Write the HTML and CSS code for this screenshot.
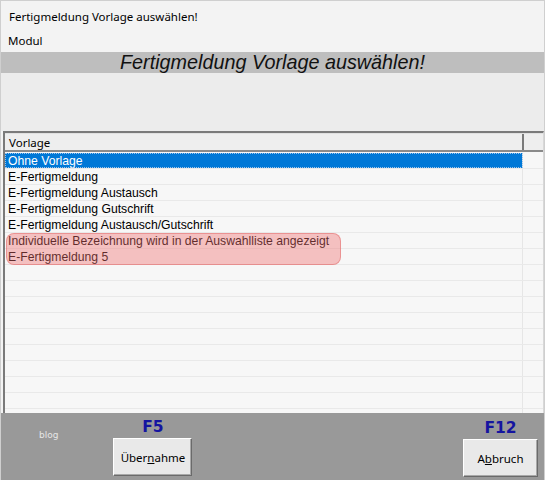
FILE: index.html
```html
<!DOCTYPE html>
<html lang="de">
<head>
<meta charset="utf-8">
<title>Fertigmeldung Vorlage auswählen!</title>
<link rel="stylesheet" href="styles.css">
</head>
<body>
<div class="window">
  <div class="titlebar">Fertigmeldung Vorlage auswählen!</div>
  <div class="menubar">Modul</div>
  <div class="banner">Fertigmeldung Vorlage auswählen!</div>
  <div class="spacer"></div>
  <div class="list">
    <div class="header">
      <div class="hcell">Vorlage</div>
      <div class="hcell hfill"></div>
    </div>
    <div class="rows">
      <div class="row selected"><div class="cell">Ohne Vorlage</div><div class="cell fill"></div></div>
      <div class="row"><div class="cell">E-Fertigmeldung</div><div class="cell fill"></div></div>
      <div class="row"><div class="cell">E-Fertigmeldung Austausch</div><div class="cell fill"></div></div>
      <div class="row"><div class="cell">E-Fertigmeldung Gutschrift</div><div class="cell fill"></div></div>
      <div class="row"><div class="cell">E-Fertigmeldung Austausch/Gutschrift</div><div class="cell fill"></div></div>
      <div class="row"><div class="cell">Individuelle Bezeichnung wird in der Auswahlliste angezeigt</div><div class="cell fill"></div></div>
      <div class="row"><div class="cell">E-Fertigmeldung 5</div><div class="cell fill"></div></div>
      <div class="row"><div class="cell"></div><div class="cell fill"></div></div>
      <div class="row"><div class="cell"></div><div class="cell fill"></div></div>
      <div class="row"><div class="cell"></div><div class="cell fill"></div></div>
      <div class="row"><div class="cell"></div><div class="cell fill"></div></div>
      <div class="row"><div class="cell"></div><div class="cell fill"></div></div>
      <div class="row"><div class="cell"></div><div class="cell fill"></div></div>
      <div class="row"><div class="cell"></div><div class="cell fill"></div></div>
      <div class="row"><div class="cell"></div><div class="cell fill"></div></div>
      <div class="row"><div class="cell"></div><div class="cell fill"></div></div>
      <div class="row"><div class="cell"></div><div class="cell fill"></div></div>
      <div class="highlight"></div>
    </div>
  </div>
  <div class="footer">
    <div class="blog">blog</div>
    <div class="btngroup first">
      <div class="fkey">F5</div>
      <button class="btn ok">Über<u>n</u>ahme</button>
    </div>
    <div class="grow"></div>
    <div class="btngroup last">
      <div class="fkey">F12</div>
      <button class="btn cancel">A<u>b</u>bruch</button>
    </div>
  </div>
</div>
</body>
</html>
```

FILE: styles.css
```css
html, body {
  margin: 0;
  padding: 0;
  background: #f3f3f3;
}

.window {
  width: 543px;
  height: 479px;
  border: 1px solid #cfcfcf;
  border-bottom: none;
  display: flex;
  flex-direction: column;
  background: #f3f3f3;
  font-family: "Noto Sans", "Open Sans", sans-serif;
  color: #000;
  overflow: hidden;
}

.titlebar {
  height: 31px;
  line-height: 31px;
  padding-left: 8px;
  font-size: 11.5px;
}

.menubar {
  height: 20px;
  line-height: 18px;
  padding-left: 7px;
  font-size: 11.5px;
}

.banner {
  height: 21px;
  line-height: 21px;
  background: #bebebe;
  text-align: center;
  font-family: "Liberation Sans", Arial, sans-serif;
  font-style: italic;
  font-size: 19.8px;
  color: #111;
}

.spacer {
  height: 58px;
  background: #ececec;
}

.list {
  height: 280px;
  flex: none;
  margin: 0 0 0 2px;
  border-top: 2px solid #7a7a7a;
  border-left: 2px solid #7a7a7a;
  border-right: 1px solid #d8d8d8;
  background: #f7f7f7;
  display: flex;
  flex-direction: column;
  overflow: hidden;
}

.header {
  display: flex;
  height: 16px;
  border-bottom: 2px solid #8a8a8a;
  background: #eeeeee;
  border-top: 1px solid #e0e0e0;
}

.hcell {
  padding-left: 4px;
  font-size: 11.5px;
  line-height: 17px;
  border-right: 2px solid #7a7a7a;
  box-sizing: border-box;
  width: 519px;
}

.hcell.hfill {
  flex: 1;
  border-right: none;
}

.rows {
  position: relative;
  flex: 1;
}

.row {
  display: flex;
  height: 16px;
  border-bottom: 1px solid #e9e9e9;
  box-sizing: border-box;
  font-family: "Liberation Sans", Arial, sans-serif;
  font-size: 12.2px;
  line-height: 16px;
}

.row:first-child {
  margin-top: 1px;
}

.cell {
  width: 518px;
  padding-left: 3px;
  box-sizing: border-box;
  border-right: 1px solid #e6e6e6;
  white-space: nowrap;
}

.cell.fill {
  flex: 1;
  border-right: none;
}

.row.selected .cell:first-child {
  background: #0078d7;
  color: #fff;
  outline: 1px dotted #9cc4ea;
  outline-offset: -1px;
}

.highlight {
  position: absolute;
  left: 1px;
  top: 81px;
  width: 335px;
  height: 32px;
  border-radius: 8px;
  background: rgba(240, 110, 110, 0.4);
  border: 1px solid rgba(225, 110, 110, 0.55);
  box-sizing: border-box;
}

.footer {
  flex: 1;
  background: #999999;
  display: flex;
  align-items: flex-end;
  padding-bottom: 3px;
}

.blog {
  align-self: flex-start;
  margin-top: 17px;
  margin-left: 38px;
  font-family: "DejaVu Sans", sans-serif;
  font-size: 9px;
  color: #e6e6e6;
}

.btngroup {
  display: flex;
  flex-direction: column;
  align-items: center;
}

.btngroup.first {
  margin-left: 55px;
}

.btngroup.last {
  margin-right: 6px;
}

.grow {
  flex: 1;
}

.fkey {
  font-family: "DejaVu Sans", Verdana, sans-serif;
  font-weight: bold;
  font-size: 15.5px;
  line-height: 17px;
  color: #1414a0;
  margin-bottom: 2px;
}

.btn {
  height: 38px;
  background: #e9e9e9;
  border: 1px solid;
  border-color: #ffffff #6a6a6a #6a6a6a #ffffff;
  box-shadow: inset -1px -1px 0 #a8a8a8;
  font-family: "Noto Sans", "Open Sans", sans-serif;
  font-size: 11.5px;
  color: #000;
  padding: 0;
}

.btn.ok {
  width: 79px;
  margin-bottom: 1px;
}

.btn.cancel {
  width: 75px;
}
```
